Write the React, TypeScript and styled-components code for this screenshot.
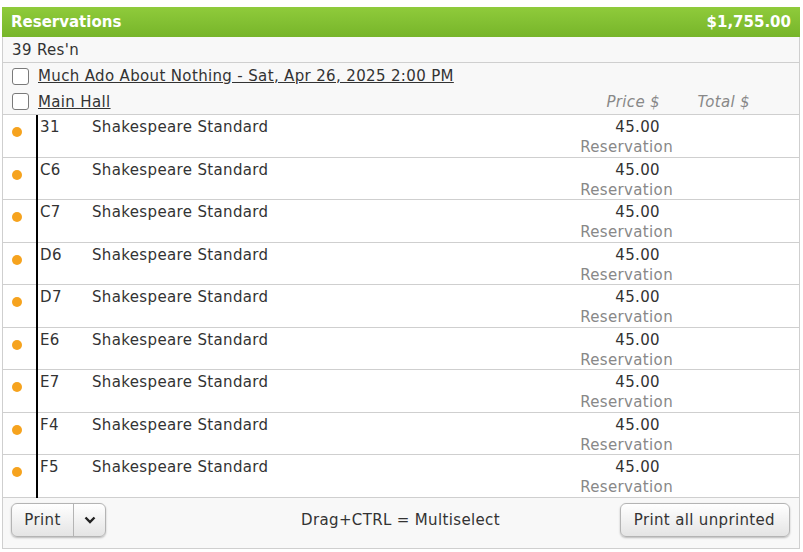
import React from "react";
import styled, { createGlobalStyle } from "styled-components";

const Global = createGlobalStyle`
  html, body { margin: 0; padding: 0; background: #fff; }
  body { font-family: "DejaVu Sans", Verdana, sans-serif; color: #333; }
`;

const Panel = styled.div`
  margin: 7px 3px 0 2px;
  width: 798px;
  box-sizing: border-box;
  border: 1px solid #cfcfcf;
  border-top: none;
  font-size: 15px;
  letter-spacing: 0.35px;
`;

const Header = styled.div`
  height: 30px;
  margin: 0 -1px;
  padding: 0 9px 0 9px;
  display: flex;
  align-items: center;
  justify-content: space-between;
  background: linear-gradient(#8fcb3b, #77b52a);
  color: #fff;
  font-weight: bold;
  font-size: 15px;
  letter-spacing: 0;
`;

const InfoRow = styled.div<{ $h: number; $border?: boolean }>`
  height: ${(p) => p.$h}px;
  display: flex;
  align-items: center;
  padding: 0 9px;
  background: #f8f8f8;
  border-bottom: ${(p) => (p.$border ? "1px solid #cfcfcf" : "none")};
  box-sizing: border-box;
`;

const Check = styled.span`
  width: 17px;
  height: 17px;
  box-sizing: border-box;
  border: 1px solid #7a7a7a;
  border-radius: 3px;
  background: #fff;
  margin-right: 9px;
  flex: none;
`;

const Link = styled.a`
  color: #333;
  text-decoration: underline;
`;

const HeadCols = styled.div`
  margin-left: auto;
  display: flex;
  font-style: italic;
  color: #888;
`;

const HeadCell = styled.span<{ $w: number; $pr: number }>`
  box-sizing: border-box;
  width: ${(p) => p.$w}px;
  padding-right: ${(p) => p.$pr}px;
  text-align: right;
`;

const DataRow = styled.div`
  display: grid;
  grid-template-columns: 33px 56px 1fr 100px 126px;
  border-bottom: 1px solid #cfcfcf;
  background: #fff;
  line-height: 20px;
  height: 42.5px;
  box-sizing: border-box;
  padding-top: 2px;
`;

const DotCell = styled.div`
  display: flex;
  justify-content: flex-start;
  padding: 12px 0 0 9px;
  margin-top: -2px;
`;

const Dot = styled.span`
  width: 10px;
  height: 10px;
  border-radius: 50%;
  background: #f6a31e;
`;

const SeatCell = styled.div`
  border-left: 2px solid #000;
  margin-top: -2px;
  padding-top: 2px;
  margin-bottom: -1px;
  padding-left: 2px;
`;

const PriceCell = styled.div`
  text-align: right;
  display: flex;
  flex-direction: column;
  align-items: flex-end;
`;

const Amount = styled.span`
  padding-right: 13px;
`;

const Sub = styled.span`
  color: #888;
`;

const Footer = styled.div`
  display: grid;
  grid-template-columns: 1fr auto 1fr;
  align-items: center;
  padding: 5px 9px 11px 8px;
  background: #f8f8f8;
`;

const SplitBtn = styled.div`
  display: inline-flex;
  justify-self: start;
  height: 34px;
  box-sizing: border-box;
  border: 1px solid #b4b4b4;
  border-radius: 6px;
  background: linear-gradient(#ffffff, #e4e4e4);
  box-shadow: 0 1px 2px rgba(0, 0, 0, 0.25);
  overflow: hidden;
`;

const BtnPart = styled.span<{ $w: number; $divider?: boolean }>`
  width: ${(p) => p.$w}px;
  display: flex;
  align-items: center;
  justify-content: center;
  border-left: ${(p) => (p.$divider ? "1px solid #b4b4b4" : "none")};
`;

const Button = styled.button`
  justify-self: end;
  height: 34px;
  padding: 0 14px 0 13px;
  font: inherit;
  letter-spacing: inherit;
  color: #333;
  border: 1px solid #b4b4b4;
  border-radius: 6px;
  background: linear-gradient(#ffffff, #e4e4e4);
  box-shadow: 0 1px 2px rgba(0, 0, 0, 0.25);
`;

const Center = styled.span`
  text-align: center;
`;

const seats = ["31", "C6", "C7", "D6", "D7", "E6", "E7", "F4", "F5"];

export default function App() {
  return (
    <>
      <Global />
      <Panel>
        <Header>
          <span>Reservations</span>
          <span>$1,755.00</span>
        </Header>
        <InfoRow $h={26} $border>
          39 Res'n
        </InfoRow>
        <InfoRow $h={26}>
          <Check />
          <Link>Much Ado About Nothing - Sat, Apr 26, 2025 2:00 PM</Link>
        </InfoRow>
        <InfoRow $h={26} $border>
          <Check />
          <Link>Main Hall</Link>
          <HeadCols>
            <HeadCell $w={100} $pr={13}>Price $</HeadCell>
            <HeadCell $w={117} $pr={40}>Total $</HeadCell>
          </HeadCols>
        </InfoRow>
        {seats.map((s) => (
          <DataRow key={s}>
            <DotCell>
              <Dot />
            </DotCell>
            <SeatCell>{s}</SeatCell>
            <div>Shakespeare Standard</div>
            <PriceCell>
              <Amount>45.00</Amount>
              <Sub>Reservation</Sub>
            </PriceCell>
            <div />
          </DataRow>
        ))}
        <Footer>
          <SplitBtn>
            <BtnPart $w={61}>Print</BtnPart>
            <BtnPart $w={31} $divider>
              <svg width="12" height="8" viewBox="0 0 12 8">
                <path d="M1.5 1.5 L6 6 L10.5 1.5" fill="none" stroke="#222" strokeWidth="2.4" />
              </svg>
            </BtnPart>
          </SplitBtn>
          <Center>Drag+CTRL = Multiselect</Center>
          <Button>Print all unprinted</Button>
        </Footer>
      </Panel>
    </>
  );
}
